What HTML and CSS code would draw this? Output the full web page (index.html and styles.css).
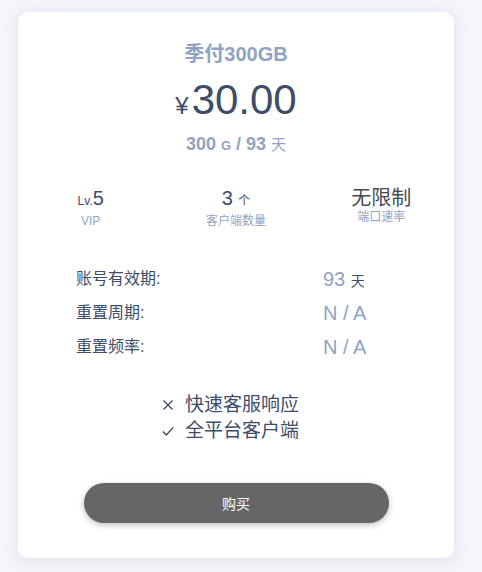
FILE: index.html
```html
<!DOCTYPE html>
<html lang="zh-CN">
<head>
    <meta charset="UTF-8">
    <meta name="viewport" content="width=device-width, initial-scale=1.0">
    <title>季付300GB</title>
    <link rel="stylesheet" href="styles.css">
</head>
<body>
    <div class="card">
        <div class="plan-title">季付300GB</div>
        <div class="price"><span class="currency">¥</span>30.00</div>
        <div class="plan-sub">300 <small>G</small> / 93 <span class="unit">天</span></div>

        <div class="stats">
            <div class="stat">
                <div class="stat-main"><small>Lv.</small>5</div>
                <div class="stat-label">VIP</div>
            </div>
            <div class="stat">
                <div class="stat-main">3 <small>个</small></div>
                <div class="stat-label">客户端数量</div>
            </div>
            <div class="stat stat-text">
                <div class="stat-main">无限制</div>
                <div class="stat-label">端口速率</div>
            </div>
        </div>

        <div class="details">
            <div class="detail-label">账号有效期:</div>
            <div class="detail-value">93 <small>天</small></div>
            <div class="detail-label">重置周期:</div>
            <div class="detail-value">N / A</div>
            <div class="detail-label">重置频率:</div>
            <div class="detail-value">N / A</div>
        </div>

        <ul class="features">
            <li>
                <svg class="icon" width="12" height="12" viewBox="0 0 12 12"><path d="M1.5 1.5 L10.5 10.5 M10.5 1.5 L1.5 10.5" stroke="#3d4d68" stroke-width="1.4" fill="none"/></svg>
                快速客服响应
            </li>
            <li>
                <svg class="icon" width="12" height="12" viewBox="0 0 12 12"><path d="M0.8 6.6 L4.3 10 L11.2 2.4" stroke="#3d4d68" stroke-width="1.4" fill="none"/></svg>
                全平台客户端
            </li>
        </ul>

        <button class="buy-btn">购买</button>
    </div>
</body>
</html>
```

FILE: styles.css
```css
body {
    margin: 0;
    padding: 12px 0 16px 18px;
    background-color: #f5f6fb;
    font-family: "Liberation Sans", Arial, "Noto Sans CJK SC", sans-serif;
    color: #3d4d68;
}

.card {
    width: 436px;
    background: #fff;
    border-radius: 10px;
    box-shadow: 0 2px 14px rgba(150, 155, 190, 0.25);
    padding: 30px 0 35px;
    text-align: center;
}

.plan-title {
    font-size: 20px;
    font-weight: bold;
    line-height: 24px;
    color: #90a3c3;
}

.price {
    margin-top: 13px;
    font-size: 42px;
    line-height: 42px;
    color: #3d4d68;
}

.currency {
    font-size: 24px;
    line-height: 1;
    margin-right: 3px;
}

.plan-sub {
    margin-top: 11px;
    font-size: 18px;
    font-weight: bold;
    line-height: 24px;
    color: #90a3c3;
}

.plan-sub small {
    font-size: 13px;
    line-height: 1;
}

.plan-sub .unit {
    font-size: 15px;
    line-height: 1;
    font-weight: normal;
}

.stats {
    display: grid;
    grid-template-columns: repeat(3, 1fr);
    margin-top: 30px;
}

.stat-main {
    font-size: 20px;
    line-height: 24px;
    color: #3d4d68;
}

.stat-main small {
    font-size: 12px;
    line-height: 1;
}

.stat-label {
    margin-top: 3px;
    font-size: 12px;
    line-height: 16px;
    color: #90a3c3;
}

.stat-text .stat-main {
    font-size: 20px;
    color: #474a52;
}

.stat-text .stat-label {
    margin-top: -1px;
}

.details {
    display: grid;
    grid-template-columns: 247px auto;
    margin-top: 33px;
    padding-left: 58px;
    text-align: left;
    line-height: 34px;
}

.detail-label {
    font-size: 16px;
    color: #3d4d68;
}

.detail-value {
    font-size: 20px;
    color: #90a3c3;
}

.detail-value small {
    font-size: 14px;
    line-height: 1;
    color: #3d4d68;
}

.features {
    list-style: none;
    margin: 28px 11px 0 0;
    padding: 0;
    display: inline-block;
    text-align: left;
    font-size: 19px;
    line-height: 26px;
    color: #3d4d68;
}

.features li {
    display: flex;
    align-items: center;
    gap: 11px;
}

.icon {
    flex: none;
}

.buy-btn {
    display: block;
    width: 305px;
    height: 40px;
    margin: 39px auto 0;
    border: none;
    border-radius: 20px;
    background-color: #666;
    color: #fff;
    font-family: inherit;
    font-size: 14px;
    box-shadow: 0 2px 6px rgba(0, 0, 0, 0.25);
    cursor: pointer;
}
```
